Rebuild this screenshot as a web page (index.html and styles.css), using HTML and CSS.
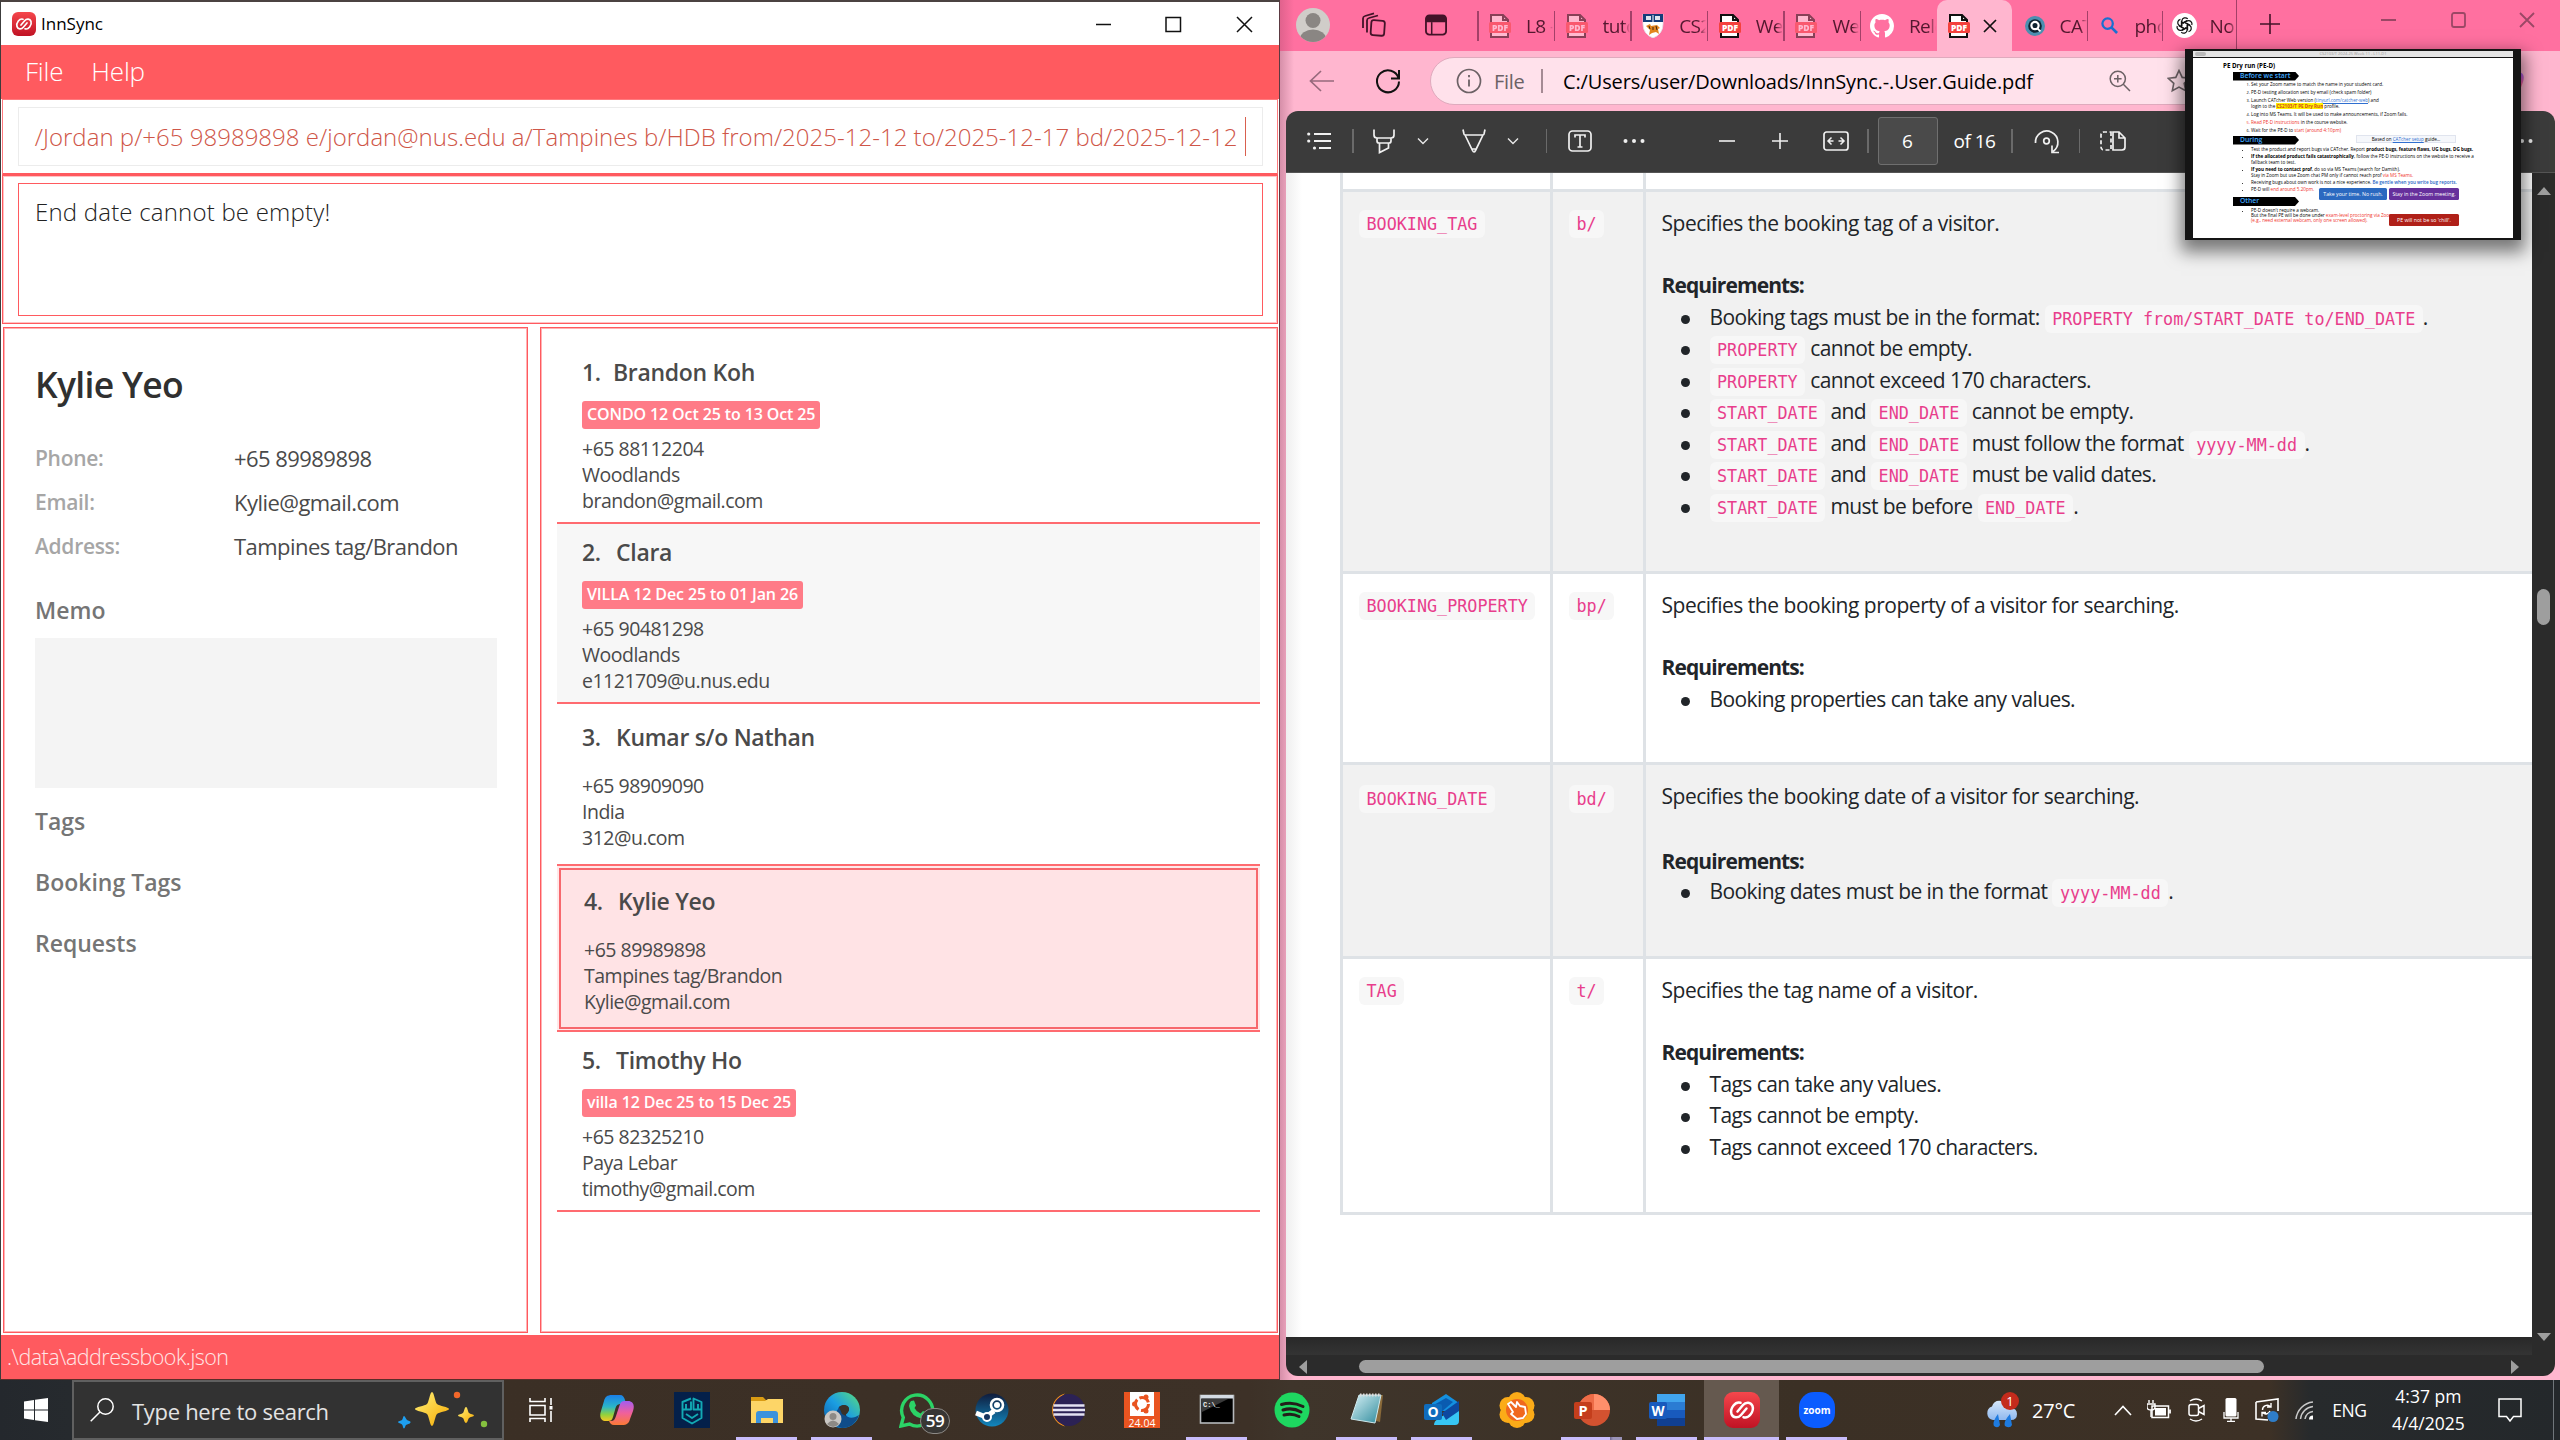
FILE: index.html
```html
<!DOCTYPE html>
<html lang="en">
<head>
<meta charset="utf-8">
<title>Desktop</title>
<link rel="stylesheet" href="styles.css">
</head>
<body>
<svg class="defs" width="0" height="0" aria-hidden="true">
  <defs>
    <linearGradient id="gRed" x1="0" y1="0" x2="0" y2="1"><stop offset="0" stop-color="#f5474c"/><stop offset="1" stop-color="#c01224"/></linearGradient>
    <linearGradient id="gCopA" x1="0" y1="0" x2="0" y2="1"><stop offset="0" stop-color="#1a7fe8"/><stop offset=".45" stop-color="#2bb5c9"/><stop offset=".75" stop-color="#8fd13f"/><stop offset="1" stop-color="#f5c722"/></linearGradient>
    <linearGradient id="gCopB" x1="0" y1="0" x2="0" y2="1"><stop offset="0" stop-color="#a45cf0"/><stop offset=".5" stop-color="#f0609c"/><stop offset="1" stop-color="#fb7a35"/></linearGradient>
    <linearGradient id="gEdge" x1="0" y1="1" x2="1" y2="0"><stop offset="0" stop-color="#0c59a4"/><stop offset=".5" stop-color="#1b9de2"/><stop offset="1" stop-color="#5be07a"/></linearGradient>
    <linearGradient id="gStar" x1="0" y1="0" x2="1" y2="1"><stop offset="0" stop-color="#fff27a"/><stop offset="1" stop-color="#f5a800"/></linearGradient>
    <linearGradient id="gSteam" x1="0" y1="0" x2="0" y2="1"><stop offset="0" stop-color="#101c3c"/><stop offset="1" stop-color="#1287be"/></linearGradient>
    <linearGradient id="gNote" x1="0" y1="0" x2="1" y2="1"><stop offset="0" stop-color="#d8f1f6"/><stop offset="1" stop-color="#2e8b9c"/></linearGradient>
    <linearGradient id="gCloud" x1="0" y1="0" x2="0" y2="1"><stop offset="0" stop-color="#d6e8fb"/><stop offset="1" stop-color="#8fb8ee"/></linearGradient>
    <symbol id="pdf" viewBox="0 0 22 24"><path d="M2 9V1h12l5 5v3M2 18v5h17v-5" fill="#fff" stroke="#111" stroke-width="2"/><path d="M14 1v5h5" fill="none" stroke="#111" stroke-width="2"/><rect x="0" y="8" width="22" height="11" rx="1.500" fill="#f4413d"/><text x="11" y="16.600" text-anchor="middle" font-family="Open Sans" font-weight="800" font-size="8.500" fill="#fff">PDF</text></symbol>
    <symbol id="innsync" viewBox="0 0 36 36"><rect width="36" height="36" rx="9" fill="url(#gRed)"/><g fill="none" stroke="#fff" stroke-width="2.500" stroke-linecap="round"><path id="hook" d="M22.500 16.500L17 23C14 26.500 9 26 7.500 22C6.500 19 7.500 16 9.500 13.500C11.500 11 14 10 16.500 10.800"/><use href="#hook" transform="rotate(180 18 18)"/></g></symbol>
    <symbol id="copilot" viewBox="0 0 34 30"><path d="M12 0h8c3 0 4 2 5 5l1 4h-5c-4 0-5 2-6 6l-2 7c-1 3-2 4-5 4H6c-5 0-7-4-5-10l3-10C5 2 7 0 12 0z" fill="url(#gCopA)"/><path d="M22 30h-8c-3 0-4-2-5-4h2c3 0 4-2 5-5l3-9c1-3 2-6 5-6h4c5 0 7 4 5 10l-3 8c-1 4-3 6-8 6z" fill="url(#gCopB)"/></symbol>
    <symbol id="chev" viewBox="0 0 12 8"><path d="M1 1.500l5 5 5-5" fill="none" stroke="#e8e8e8" stroke-width="1.400"/></symbol>
  </defs>
</svg>

<div class="desktop">
  <div class="windows">

    <section class="app">
      <header class="app-title">
        <svg class="app-logo" viewBox="0 0 36 36"><use href="#innsync"/></svg>
        <span class="app-name">InnSync</span>
        <svg class="app-controls" viewBox="0 0 160 20"><path d="M1 10.500h15M71 3.500h14.500v14H71zM142 3l15 15M157 3l-15 15" fill="none" stroke="#111" stroke-width="1.500"/></svg>
      </header>
      <nav class="menu"><span class="m-file">File</span><span class="m-help">Help</span></nav>
      <div class="command-pane"><div class="command-box"><div class="command-clip"><span class="command-text">/Jordan p/+65 98989898 e/jordan@nus.edu a/Tampines b/HDB from/2025-12-12 to/2025-12-17 bd/2025-12-12</span></div><i class="caret"></i></div></div>
      <div class="result-pane"><div class="result-box"><span class="result-text">End date cannot be empty!</span></div></div>
      <div class="split">
        <aside class="detail">
          <h1>Kylie Yeo</h1>
          <dl>
            <dt>Phone:</dt><dd>+65 89989898</dd>
            <dt>Email:</dt><dd>Kylie@gmail.com</dd>
            <dt>Address:</dt><dd>Tampines tag/Brandon</dd>
          </dl>
          <h2>Memo</h2>
          <div class="memo"></div>
          <h2>Tags</h2>
          <h2>Booking Tags</h2>
          <h2>Requests</h2>
        </aside>
        <main class="list">
          <article class="cell">
            <h3><span class="num">1.</span>Brandon Koh</h3>
            <span class="badge">CONDO 12 Oct 25 to 13 Oct 25</span>
            <p>+65 88112204</p><p>Woodlands</p><p>brandon@gmail.com</p>
          </article>
          <article class="cell shaded">
            <h3><span class="num wide">2.</span>Clara</h3>
            <span class="badge">VILLA 12 Dec 25 to 01 Jan 26</span>
            <p>+65 90481298</p><p>Woodlands</p><p>e1121709@u.nus.edu</p>
          </article>
          <article class="cell plain">
            <h3><span class="num wide">3.</span>Kumar s/o Nathan</h3>
            <p>+65 98909090</p><p>India</p><p>312@u.com</p>
          </article>
          <article class="cell plain selected">
            <div class="sel-frame">
              <h3><span class="num wide">4.</span>Kylie Yeo</h3>
              <p>+65 89989898</p><p>Tampines tag/Brandon</p><p>Kylie@gmail.com</p>
            </div>
          </article>
          <article class="cell">
            <h3><span class="num wide">5.</span>Timothy Ho</h3>
            <span class="badge">villa 12 Dec 25 to 15 Dec 25</span>
            <p>+65 82325210</p><p>Paya Lebar</p><p>timothy@gmail.com</p>
          </article>
        </main>
      </div>
      <footer class="status">.\data\addressbook.json</footer>
    </section>

    <section class="browser">
      <div class="tabstrip">
        <svg class="avatar" viewBox="0 0 34 34"><circle cx="17" cy="17" r="17" fill="#d0cdc9"/><clipPath id="av"><circle cx="17" cy="17" r="17"/></clipPath><g clip-path="url(#av)" fill="#8a8683"><circle cx="17" cy="12.500" r="7.500"/><ellipse cx="17" cy="31" rx="13" ry="9.500"/></g></svg>
        <svg class="workspaces" viewBox="0 0 26 26" fill="none" stroke="#431328" stroke-width="1.800" stroke-linejoin="round"><rect x="11" y="8.500" width="13.500" height="15" rx="2.500" transform="rotate(4 18 16)"/><path d="M7 20.500V8.500q0-2 2-2.500l9-2.500M3 16V6.500q0-2 2-2.500l9-2.700"/></svg>
        <svg class="tabactions" viewBox="0 0 24 22"><rect x="1" y="1" width="21" height="20" rx="3.500" fill="none" stroke="#431328" stroke-width="1.900"/><path d="M1 8V4q0-3 3-3h15q3 0 3 3v4z" fill="#431328"/><path d="M7 8v13" stroke="#431328" stroke-width="1.600"/></svg>
        <div class="tabs">
          <div class="tab dim"><svg viewBox="0 0 22 24"><use href="#pdf"/></svg><span>L8 -</span></div>
          <div class="tab dim"><svg viewBox="0 0 22 24"><use href="#pdf"/></svg><span>tuto</span></div>
          <div class="tab"><svg viewBox="0 0 22 24"><path d="M1 0h20v10q0 10-10 14Q1 20 1 10z" fill="#fff" stroke="#e3e3ea" stroke-width=".8"/><path d="M1 0h20v8H1z" fill="#153d7a"/><path d="M4 2h5v4H4zM13 2h5v4h-5z" fill="#dfe5ee"/><path d="M11 1v7" stroke="#fff"/><path d="M4 12l4-2 1 2 6-1 3 3-2 1 1 5-3-2-4 1-3 2 1-5z" fill="#e2851e"/><path d="M7 12l1 3M11 13v3M14 12l1 4" stroke="#3a2410"/></svg><span>CS2</span></div>
          <div class="tab"><svg viewBox="0 0 22 24"><use href="#pdf"/></svg><span>We</span></div>
          <div class="tab dim"><svg viewBox="0 0 22 24"><use href="#pdf"/></svg><span>We</span></div>
          <div class="tab github"><svg viewBox="0 0 16 16"><path fill="#fff" d="M8 0C3.580 0 0 3.580 0 8c0 3.540 2.290 6.530 5.470 7.590.4.070.55-.17.55-.38 0-.19-.01-.82-.01-1.490-2.010.37-2.530-.49-2.690-.94-.09-.23-.48-.94-.82-1.130-.28-.15-.68-.52-.01-.53.63-.01 1.080.58 1.230.82.72 1.210 1.870.87 2.330.66.070-.52.28-.87.51-1.070-1.780-.2-3.640-.89-3.640-3.950 0-.87.31-1.590.82-2.150-.08-.2-.36-1.020.08-2.120 0 0 .67-.21 2.200.82.64-.18 1.320-.27 2-.27s1.360.09 2 .27c1.530-1.040 2.200-.82 2.200-.82.44 1.100.16 1.920.08 2.120.51.56.82 1.270.82 2.150 0 3.070-1.870 3.750-3.650 3.950.29.25.54.73.54 1.480 0 1.070-.01 1.930-.01 2.200 0 .21.15.46.55.38A8.010 8.010 0 0 0 16 8c0-4.420-3.580-8-8-8z"/></svg><span>Rele</span></div>
          <div class="tab active"><svg viewBox="0 0 22 24"><use href="#pdf"/></svg><svg class="x" viewBox="0 0 14 14"><path d="M1 1l12 12M13 1L1 13" stroke="#111" stroke-width="1.700"/></svg></div>
          <div class="tab narrow"><svg viewBox="0 0 22 22"><circle cx="11" cy="11" r="11" fill="#4c8fb0"/><circle cx="11" cy="11" r="7.500" fill="#0e2230"/><circle cx="11" cy="10.500" r="4" fill="none" stroke="#fff" stroke-width="2.400"/><path d="M13 13l4 4" stroke="#fff" stroke-width="2"/></svg><span>CAT</span></div>
          <div class="tab narrow photo"><svg viewBox="0 0 18 18"><circle cx="7" cy="7" r="5.500" fill="none" stroke="#1b6fd0" stroke-width="2.400"/><path d="M11 11l6 6" stroke="#1b6fd0" stroke-width="2.800"/></svg><span>pho</span></div>
          <div class="tab narrow gpt"><svg viewBox="0 0 24 24"><circle cx="12" cy="12" r="12" fill="#fff"/><g fill="none" stroke="#111" stroke-width="1.200"><path id="petal" d="M9.500 12.500V7.500a3.200 3.200 0 0 1 5.600-1.800M9.500 10l5-2.800"/><use href="#petal" transform="rotate(60 12 12)"/><use href="#petal" transform="rotate(120 12 12)"/><use href="#petal" transform="rotate(180 12 12)"/><use href="#petal" transform="rotate(240 12 12)"/><use href="#petal" transform="rotate(300 12 12)"/></g></svg><span>No</span></div>
        </div>
        <svg class="newtab" viewBox="0 0 22 22"><path d="M11 1v20M1 11h20" stroke="#431328" stroke-width="1.600"/></svg>
        <svg class="win-controls" viewBox="0 0 154 16"><path d="M0 8h15M139 1l14 14M153 1l-14 14" stroke="#9b4765" stroke-width="1.800"/><rect x="71" y="1" width="13" height="14" rx="2" fill="none" stroke="#9b4765" stroke-width="1.800"/></svg>
      </div>

      <div class="navbar">
        <svg class="back" viewBox="0 0 26 22"><path d="M12 1L1.500 11 12 21M1.500 11H25" fill="none" stroke="#97697c" stroke-width="1.700"/></svg>
        <svg class="reload" viewBox="0 0 26 26"><path d="M23.500 10A11 11 0 1 0 24 13.500M24 2v8.500h-8" fill="none" stroke="#111" stroke-width="2"/></svg>
        <div class="address">
          <svg class="info" viewBox="0 0 26 26"><circle cx="13" cy="13" r="11.500" fill="none" stroke="#6c6165" stroke-width="1.700"/><path d="M13 11.500v7M13 7v2.200" stroke="#6c6165" stroke-width="1.800"/></svg>
          <span class="scheme">File</span><i class="bar"></i>
          <span class="url">C:/Users/user/Downloads/InnSync.-.User.Guide.pdf</span>
          <svg class="zoomi" viewBox="0 0 22 22"><circle cx="8.800" cy="8.800" r="7.600" fill="none" stroke="#6c6165" stroke-width="1.500"/><path d="M14.300 14.300l6.700 6.700M5 8.800h7.600M8.800 5v7.600" stroke="#6c6165" stroke-width="1.500"/></svg>
          <svg class="star" viewBox="0 0 24 24"><path d="M12 1.500l3.200 6.900 7.500.9-5.500 5.100 1.500 7.400-6.700-3.700-6.700 3.700 1.500-7.400L1.300 9.300l7.500-.9z" fill="none" stroke="#6c6165" stroke-width="1.600"/></svg>
        </div>
        <svg class="nav-copilot" viewBox="0 0 34 30"><use href="#copilot"/></svg>
      </div>

      <div class="pdfbar">
        <svg class="t-list" viewBox="0 0 24 18"><path d="M7 2h17M7 9h17M12 16h12" stroke="#f0f0f0" stroke-width="1.800"/><g fill="#f0f0f0"><circle cx="1.700" cy="2" r="1.600"/><circle cx="1.700" cy="9" r="1.600"/><circle cx="7.500" cy="16" r="1.600"/></g></svg>
        <i class="sep s1"></i>
        <svg class="t-high" viewBox="0 0 24 25"><path d="M2 .5V6q0 3 3 3h14q3 0 3-3V.5M5 9v3q0 2 2 2h10q2 0 2-2V9M7.500 14v9.500l9-4.500v-5" fill="none" stroke="#f0f0f0" stroke-width="1.700"/></svg>
        <svg class="chev c1" viewBox="0 0 12 8"><use href="#chev"/></svg>
        <svg class="t-pen" viewBox="0 0 24 25"><path d="M1 .5L2 5q.3 1 1.500 1h17q1.200 0 1.500-1L23 .5M3 6l7.500 15.500q1.500 3 3 0L21 6M9.800 20h4.400" fill="none" stroke="#f0f0f0" stroke-width="1.700"/></svg>
        <svg class="chev c2" viewBox="0 0 12 8"><use href="#chev"/></svg>
        <i class="sep s2"></i>
        <svg class="t-text" viewBox="0 0 24 22"><rect x="1" y="1" width="22" height="20" rx="3.500" fill="none" stroke="#f0f0f0" stroke-width="1.700"/><path d="M7 7.500V5h10v2.500M12 5v12M9.500 17h5" fill="none" stroke="#f0f0f0" stroke-width="1.700"/></svg>
        <svg class="t-dots" viewBox="0 0 22 6" fill="#f0f0f0"><circle cx="2.500" cy="3" r="2"/><circle cx="11" cy="3" r="2"/><circle cx="19.500" cy="3" r="2"/></svg>
        <svg class="t-minus" viewBox="0 0 16 16"><path d="M0 8h16" stroke="#f0f0f0" stroke-width="1.600"/></svg>
        <svg class="t-plus" viewBox="0 0 16 16"><path d="M0 8h16M8 0v16" stroke="#f0f0f0" stroke-width="1.600"/></svg>
        <svg class="t-fit" viewBox="0 0 26 20"><rect x="1" y="1" width="24" height="18" rx="2.500" fill="none" stroke="#f0f0f0" stroke-width="1.700"/><path d="M8.500 6.500L5 10l3.500 3.500M17.500 6.500L21 10l-3.500 3.500M5 10h5.500M15.500 10H21" fill="none" stroke="#f0f0f0" stroke-width="1.500"/></svg>
        <i class="sep s3"></i>
        <span class="page-input">6</span><span class="page-of">of 16</span>
        <i class="sep s4"></i>
        <svg class="t-rot" viewBox="0 0 26 26"><path d="M1.500 15A11.200 11.200 0 1 1 19 23.500M25 24.500h-7v-7" fill="none" stroke="#f0f0f0" stroke-width="1.700"/><circle cx="12.500" cy="13" r="2.800" fill="none" stroke="#f0f0f0" stroke-width="1.700"/></svg>
        <i class="sep s5"></i>
        <svg class="t-view" viewBox="0 0 26 20"><path d="M11 1v18H4q-3 0-3-3V4q0-3 3-3z" fill="none" stroke="#f0f0f0" stroke-width="1.700" stroke-dasharray="4 2.500"/><path d="M13 1h6l6 6v9q0 3-3 3h-9zM19 1v6h6" fill="none" stroke="#f0f0f0" stroke-width="1.700"/></svg>
        <svg class="t-more" viewBox="0 0 22 6" fill="#f0f0f0"><circle cx="2.500" cy="3" r="2"/><circle cx="11" cy="3" r="2"/><circle cx="19.500" cy="3" r="2"/></svg>
      </div>

      <div class="viewer">
        <div class="page">
          <div class="params">
            <div class="row stub"><div></div><div></div><div></div></div>
            <div class="row r1">
              <div><code>BOOKING_TAG</code></div><div><code>b/</code></div>
              <div><p>Specifies the booking tag of a visitor.</p><p class="req"><b>Requirements:</b></p>
                <ul>
                  <li>Booking tags must be in the format: <code>PROPERTY from/START_DATE to/END_DATE</code>.</li>
                  <li><code>PROPERTY</code> cannot be empty.</li>
                  <li><code>PROPERTY</code> cannot exceed 170 characters.</li>
                  <li><code>START_DATE</code> and <code>END_DATE</code> cannot be empty.</li>
                  <li><code>START_DATE</code> and <code>END_DATE</code> must follow the format <code>yyyy-MM-dd</code>.</li>
                  <li><code>START_DATE</code> and <code>END_DATE</code> must be valid dates.</li>
                  <li><code>START_DATE</code> must be before <code>END_DATE</code>.</li>
                </ul></div>
            </div>
            <div class="row r2">
              <div><code>BOOKING_PROPERTY</code></div><div><code>bp/</code></div>
              <div><p>Specifies the booking property of a visitor for searching.</p><p class="req"><b>Requirements:</b></p><ul><li>Booking properties can take any values.</li></ul></div>
            </div>
            <div class="row r3">
              <div><code>BOOKING_DATE</code></div><div><code>bd/</code></div>
              <div><p>Specifies the booking date of a visitor for searching.</p><p class="req"><b>Requirements:</b></p><ul><li>Booking dates must be in the format <code>yyyy-MM-dd</code>.</li></ul></div>
            </div>
            <div class="row r4">
              <div><code>TAG</code></div><div><code>t/</code></div>
              <div><p>Specifies the tag name of a visitor.</p><p class="req"><b>Requirements:</b></p><ul><li>Tags can take any values.</li><li>Tags cannot be empty.</li><li>Tags cannot exceed 170 characters.</li></ul></div>
            </div>
          </div>
        </div>
        <div class="vscroll"><i class="up"></i><i class="vthumb"></i><i class="down"></i></div>
        <div class="gutter"></div>
        <div class="hscroll"><i class="left"></i><i class="hthumb"></i><i class="right"></i></div>
      </div>
    </section>
  </div>

  <footer class="taskbar">
    <svg class="start" viewBox="0 0 24 24" fill="#fff"><path d="M0 3.500L10 2v9.500H0zM11 1.800L24 0v11.500H11zM0 12.500h10V22L0 20.500zM11 12.500h13V24l-13-1.800z"/></svg>
    <div class="search">
      <svg class="glass" viewBox="0 0 24 24"><circle cx="15.500" cy="8.500" r="7.700" fill="none" stroke="#fff" stroke-width="1.500"/><path d="M10 14L.7 23.300" stroke="#fff" stroke-width="1.500"/></svg>
      <span class="search-text">Type here to search</span>
      <svg class="sparkles" viewBox="0 0 92 38"><path d="M34 1c2 0 3 10 5 12s12 3 12 5-10 3-12 5-3 12-5 12-3-10-5-12-12-3-12-5 10-3 12-5 3-12 5-12z" fill="url(#gStar)"/><path d="M68 16c1.500 0 2 5 3 6s5 1.500 5 2.500-4 1.500-5 2.500-1.500 5-3 5-2-4-3-5-5-1.500-5-2.500 4-1.500 5-2.500 1.500-6 3-6z" fill="url(#gStar)"/><path d="M6 25c1 0 2 3 3 4s4 1 3.500 2.500S9 33 8 34s-1 3.500-2 3.500-1-3-2-4-4-1.500-4-2.500 3-1 4-2 1-4 2-4z" fill="#1e9ff0"/><circle cx="59" cy="4" r="3.200" fill="#f2672a"/><circle cx="86" cy="33" r="3.200" fill="#85c13f"/></svg>
    </div>
    <div class="icons">
      <div class="slot"><svg class="small" viewBox="0 0 24 24"><path d="M1 0v3.500h15V0M1 24v-3.500h15V24M1 7.500h15v9.500H1zM22 0v7M22 13v11" fill="none" stroke="#fff" stroke-width="1.600"/><rect x="20.500" y="8" width="3" height="3.500" fill="#fff"/></svg></div>
      <div class="slot"><svg viewBox="0 0 36 36"><use href="#copilot" x="1" y="3" width="34" height="30"/></svg></div>
      <div class="slot"><svg viewBox="0 0 36 36"><rect width="36" height="36" fill="#04204a"/><path d="M17 6.500L8.500 10v16l9.500 5.500L27.500 26V10L19.500 6.500v11l8 0M8.500 17.500H17v-8M12 12v5M24 12v5M12 22l6 4 6-4" fill="none" stroke="#12a9b4" stroke-width="1.900" stroke-linejoin="round"/></svg></div>
      <div class="slot run"><svg viewBox="0 0 36 36"><path d="M2 5h12l3 3h15v5H2z" fill="#d99b13"/><path d="M2 9h14l3-2h15v24H2z" fill="#fdd567"/><path d="M7 31V22q0-3 3-3h16q3 0 3 3v9h-5v-5H12v5z" fill="#3b92dd"/></svg></div>
      <div class="slot run"><svg viewBox="0 0 36 36"><circle cx="18" cy="18" r="18" fill="url(#gEdge)"/><path d="M14 17c1-5 12-5 11 1-1 3-4 3-3 5 2 4 9 3 13 0-3 9-10 13-17 13-8-2-10-11-4-19z" fill="#0f4c8a"/><path d="M15 15c5-4 11-1 10 3s-4 4-3 6l-4-2z" fill="#3a3128"/><circle cx="9" cy="27" r="8.500" fill="#c9c6c3"/><circle cx="9" cy="24.500" r="3.500" fill="#8d8985"/><path d="M3 32q6-7 12 0-6 6-12 0z" fill="#8d8985"/></svg></div>
      <div class="slot"><svg viewBox="0 0 36 36"><path d="M2 34l2.300-8.500A15.500 15.500 0 1 1 10.500 32z" fill="#3d3126" stroke="#2bd366" stroke-width="3.400"/><path d="M12 9l3-.5 2 5-1.500 2.500q2 4 6 5.500l2.500-2.500 5 2.500q0 5-5 5.500Q12 25 10 14q0-3 2-5z" fill="#2bd366"/></svg><span class="count">59</span></div>
      <div class="slot"><svg viewBox="0 0 36 36"><circle cx="18" cy="18" r="16.500" fill="url(#gSteam)"/><path d="M2 21l10 4 8-6" stroke="#fff" stroke-width="5" fill="none"/><circle cx="23" cy="13" r="6" fill="none" stroke="#fff" stroke-width="2.600"/><circle cx="23" cy="13" r="3" fill="#fff"/><circle cx="13" cy="25" r="4" fill="#16345e" stroke="#fff" stroke-width="2"/></svg></div>
      <div class="slot"><svg viewBox="0 0 36 36"><path d="M16 1.500A17 17 0 0 0 16 34.500A20 20 0 0 1 16 1.500z" fill="#f7941e"/><circle cx="20" cy="18" r="16" fill="#2c2255"/><path d="M4.500 13.500h31M4 18h32M4.500 22.500h31" stroke="#e4e2f2" stroke-width="2.600"/></svg></div>
      <div class="slot"><svg viewBox="0 0 36 36"><rect width="36" height="36" fill="#e95420"/><rect x="6" width="24" height="24" fill="#fff"/><circle cx="18" cy="12" r="6.500" fill="none" stroke="#e95420" stroke-width="3" stroke-dasharray="11 2.600"/><g fill="#e95420"><circle cx="10.500" cy="12" r="2.500"/><circle cx="22" cy="5" r="2.500"/><circle cx="22" cy="19" r="2.500"/></g><text x="18" y="34.500" text-anchor="middle" font-family="Open Sans" font-size="10.500" fill="#fff">24.04</text></svg></div>
      <div class="slot run"><svg viewBox="0 0 36 36"><rect x="1.500" y="3.500" width="33" height="27.500" fill="#000" stroke="#b5b8bb" stroke-width="1.600"/><path d="M2 3h32v3.500H2z" fill="#d4dbe3"/><path d="M3 7h26L3 20z" fill="#3a3a3a"/><text x="4" y="14.500" font-family="Liberation Mono" font-weight="700" font-size="7" fill="#eee">C:\_</text></svg></div>
      <div class="slot"><svg viewBox="0 0 36 36"><circle cx="18" cy="18" r="17.500" fill="#1ed760"/><path d="M7.500 12.500q11-3.500 21.500 2M9 18q9.500-3 18 2M10 23q8-2.300 15 1.500" fill="none" stroke="#231f1a" stroke-width="3" stroke-linecap="round"/></svg></div>
      <div class="slot run"><svg viewBox="0 0 36 36"><path d="M12 3h22l-3 27-4-1z" fill="#8a6a3a"/><path d="M10 3h22l-6 28-24-4z" fill="url(#gNote)" stroke="#cfe8ec"/><path d="M11 3h21" stroke="#dedede" stroke-width="3" stroke-dasharray="1.500 1.500"/></svg></div>
      <div class="slot run"><svg viewBox="0 0 36 36"><path d="M8 11L22 2l13 9v8H8z" fill="#1490df"/><path d="M8 14l14-8 7 4-14 12z" fill="#0a5bb0"/><path d="M10 33q0-4 4-6l21-14v16q0 4-4 4z" fill="#37c6f4"/><path d="M18 21l17-12v10L22 28z" fill="#0d48a0"/><rect y="12" width="18" height="16" rx="2" fill="#0f6cbd"/><text x="9" y="25" text-anchor="middle" font-family="Open Sans" font-weight="700" font-size="14" fill="#fff">O</text></svg></div>
      <div class="slot"><svg viewBox="0 0 36 36"><g fill="#fbab18"><circle cx="18" cy="9" r="9"/><circle cx="18" cy="27" r="9"/><circle cx="9" cy="13.500" r="8.500"/><circle cx="27" cy="13.500" r="8.500"/><circle cx="9" cy="22.500" r="8.500"/><circle cx="27" cy="22.500" r="8.500"/></g><circle cx="18" cy="18" r="11" fill="#f0681e"/><path d="M9 12l3-2 5 5 1-5 3 4 5 1 1 7-3 4-6 1-6-5 2-2z" fill="#f0681e" stroke="#fff" stroke-width="1.800" stroke-linejoin="round"/></svg></div>
      <div class="slot run stacked"><svg viewBox="0 0 36 36"><path d="M20 2a16 16 0 0 1 0 32A16 16 0 0 1 20 2z" fill="#d35230"/><path d="M20 2a16 16 0 0 1 16 16H20z" fill="#ff8f6b"/><path d="M20 2v16H4A16 16 0 0 1 20 2z" fill="#ed6c47"/><rect y="10" width="18" height="17" rx="2" fill="#c43e1c"/><text x="9" y="24" text-anchor="middle" font-family="Open Sans" font-weight="700" font-size="14.500" fill="#fff">P</text></svg></div>
      <div class="slot run"><svg viewBox="0 0 36 36"><rect x="8" y="2" width="28" height="32" rx="2" fill="#2b7cd3"/><path d="M8 2h28v8H8z" fill="#41a5ee"/><path d="M8 18h28v8H8z" fill="#185abd"/><path d="M8 26h28v8H8z" fill="#103f91"/><rect y="10" width="18" height="17" rx="2" fill="#185abd"/><text x="9" y="23.500" text-anchor="middle" font-family="Open Sans" font-weight="700" font-size="13.500" fill="#fff">W</text></svg></div>
      <div class="slot run current"><svg viewBox="0 0 36 36"><use href="#innsync"/></svg></div>
      <div class="slot run"><svg viewBox="0 0 36 36"><rect width="36" height="36" rx="15" fill="#0b5cff"/><text x="18" y="21.500" text-anchor="middle" font-family="Open Sans" font-weight="700" font-size="10" fill="#fff">zoom</text></svg></div>
    </div>
    <div class="tray">
      <svg class="weather" viewBox="0 0 36 36"><path d="M9 28a7 7 0 0 1-1-13.500Q10 8 17 9t9 7q7 0 7 6t-6 6z" fill="url(#gCloud)"/><path d="M14 22q-6 8-4 12 4 3 6-1zM26 22q-7 8-5 12 5 3 7-1z" fill="#1e7be0"/><circle cx="26" cy="9" r="9" fill="#c42b1c"/><text x="26" y="13.500" text-anchor="middle" font-family="Open Sans" font-size="13" fill="#fff">1</text></svg>
      <span class="temp">27°C</span>
      <svg class="up-chev" viewBox="0 0 18 11"><path d="M1 10l8-8.500L17 10" fill="none" stroke="#fff" stroke-width="1.600"/></svg>
      <svg class="battery" viewBox="0 0 24 20"><rect x="5" y="6" width="16.500" height="11.500" fill="none" stroke="#fff" stroke-width="1.500"/><rect x="8" y="8" width="11" height="7.500" fill="#fff"/><path d="M23 9.500v4" stroke="#fff" stroke-width="1.800"/><path d="M2 0v3M6 0v3M0 4h8v3q0 3-4 3t-4-3zM4 10v7" fill="none" stroke="#fff" stroke-width="1.400"/></svg>
      <svg class="cam" viewBox="0 0 17 24"><rect x="1" y="6.500" width="9.500" height="11" rx="2" fill="none" stroke="#fff" stroke-width="1.500"/><path d="M10.500 10.500l5.500-3v9l-5.500-3M2 3q6-4 12 0M2 21q6 4 12 0" fill="none" stroke="#fff" stroke-width="1.500"/></svg>
      <svg class="mic" viewBox="0 0 16 24"><rect x="2.500" y="0" width="11" height="18.500" rx="1.500" fill="#fff"/><path d="M1 14v6h14v-6M8 20v3M4 23.300h8" fill="none" stroke="#fff" stroke-width="1.300"/></svg>
      <svg class="sync" viewBox="0 0 24 24"><path d="M1 4L23 1v12M1 4v17l12 1" fill="none" stroke="#fff" stroke-width="1.600"/><path d="M7.500 12a4.500 4.500 0 0 1 8-3M16 5v4h-4M15 13a4.500 4.500 0 0 1-7 2M7 18.500v-4h4" fill="none" stroke="#fff" stroke-width="1.400"/><circle cx="18" cy="18.500" r="5.500" fill="#2f7dc8"/></svg>
      <svg class="wifi" viewBox="0 0 18 20"><path d="M1 19A19 19 0 0 1 18 2M5.500 19A14 14 0 0 1 18 6.500M10 19a9 9 0 0 1 8-7.500" fill="none" stroke="#c9c9c9" stroke-width="1.500"/><path d="M14 19.500a4 4 0 0 1 4-4v4z" fill="#fff"/></svg>
      <span class="lang">ENG</span>
      <div class="clock"><span>4:37 pm</span><span>4/4/2025</span></div>
      <svg class="notice" viewBox="0 0 24 24"><path d="M1 1h22v17.500H15.500L12 23l-3.500-4.500H1z" fill="none" stroke="#fff" stroke-width="1.500"/></svg>
      <i class="peek"></i>
    </div>
  </footer>

  <aside class="pip">
    <div class="pip-top"><i></i><span>CS2103/T 2024-25 Week 11 - L11-D1</span></div>
    <div class="slide">
      <h4>PE Dry run (PE-D)</h4>
      <h5>Before we start</h5>
      <ol>
        <li>Set your Zoom name to match the name in your student card.</li>
        <li>PE-D testing allocation sent by email (check spam folder)</li>
        <li class="two">Launch CATcher Web version (<u>tinyurl.com/catcher-web</u>) and<br>login to the <mark>CS2103/T PE Dry Run</mark> profile.</li>
        <li>Log into MS Teams. It will be used to make announcements, if Zoom fails.</li>
        <li class="red-num"><em>Read PE-D instructions</em> in the course website.</li>
        <li>Wait for the PE-D to <em>start (around 4:10pm)</em></li>
      </ol>
      <h5 class="during">During</h5>
      <ul class="mid">
        <li>Test the product and report bugs via CATcher. Report <b>product bugs, feature flaws, UG bugs, DG bugs.</b></li>
        <li class="two"><b>If the allocated product fails catastrophically</b>, follow the PE-D instructions on the website to receive a<br>fallback team to test.</li>
        <li class="two"><b>If you need to contact prof</b>, do so via MS Teams (search for Damith).<br>Stay in Zoom but use Zoom chat PM only if cannot reach prof <em>via MS Teams.</em></li>
        <li>Receiving bugs about own work is not a nice experience. <strong>Be gentle when you write bug reports.</strong></li>
        <li>PE-D will <em>end around 5.20pm.</em></li>
      </ul>
      <h5 class="other">Other</h5>
      <ul class="last">
        <li>PE-D doesn't require a webcam.<br>But the final PE will be done under <em>exam-level proctoring via Zoom</em><br><em>(e.g., need external webcam, only one screen allowed).</em></li>
      </ul>
      <span class="note-box">Based on <u>CATcher setup</u> guide…</span>
      <span class="tile blue">Take your time. No rush.</span>
      <span class="tile purple">Stay in the Zoom meeting.</span>
      <span class="tile red">PE will not be so 'chill'.</span>
    </div>
  </aside>
</div>
</body>
</html>
```
FILE: styles.css
```css
* { box-sizing: border-box; }
html, body { margin: 0; padding: 0; }
body { width: 2560px; height: 1440px; overflow: hidden; font-family: "Open Sans", "Noto Sans", sans-serif; background: #2d2926; }
h1, h2, h3, h4, h5, p, ul, ol, dl, dd { margin: 0; padding: 0; }
svg { display: block; flex: none; }
.defs { position: absolute; }
i { display: block; flex: none; }
.desktop { position: relative; width: 2560px; height: 1440px; display: flex; flex-direction: column; }
.windows { display: flex; height: 1380px; }

/* InnSync window */
.app { width: 1280px; height: 1380px; display: flex; flex-direction: column; background: #fff; border-top: 2px solid #4b4341; border-left: 1px solid #3c3c3c; border-right: 1px solid #5c3a42; border-bottom: 1px solid #5b2d29; }
.app-title { height: 43px; display: flex; align-items: center; padding-left: 11px; }
.app-logo { width: 24px; height: 24px; }
.app-name { margin-left: 5px; font-size: 17px; color: #000; white-space: nowrap; }
.app-controls { width: 160px; height: 20px; margin-left: auto; margin-right: 24px; }
.menu { height: 54px; background: #ff5a5f; display: flex; align-items: center; padding: 0 0 2px 24px; font-size: 26px; font-weight: 300; letter-spacing: -.2px; color: #fff; }
.m-help { margin-left: 28px; }
.command-pane { height: 76px; margin: 0 1px; padding: 7px 14px 7px 15px; border: 1px solid #ff7b7f; border-bottom: 2px solid #ff5a5f; }
.command-box { height: 59px; border: 1px solid #ececec; display: flex; align-items: center; padding: 0 16px 0 15px; }
.command-clip { flex: 1; height: 40px; display: flex; justify-content: flex-end; align-items: center; overflow: hidden; }
.command-text { flex: none; font-size: 24px; font-weight: 300; letter-spacing: .020px; color: #cf5648; white-space: nowrap; }
.caret { width: 1.500px; height: 39px; margin-left: 7px; background: #d9604f; }
.result-pane { height: 149px; margin: 0 1px; padding: 7px 14px 7px 15px; border: 1px solid #ff5a5f; box-shadow: inset 0 0 0 1px #ffc3c5; }
.result-box { height: 133px; border: 1.500px solid #ff5a5f; padding: 9px 16px; font-size: 24px; font-weight: 300; letter-spacing: .200px; line-height: 38px; color: #222; }
.split { flex: 1; display: flex; gap: 12px; padding: 3px 1px 2px 2px; }
.detail, .list { border: 1px solid #ff5a5f; box-shadow: inset 0 0 0 1px #ffb3b5; }
.detail { width: 525px; padding: 32px 31px 0 31px; }
.list { flex: 1; padding: 16px 17px 0 16px; }
h1 { font-size: 35.500px; font-weight: 600; letter-spacing: -.700px; line-height: 48px; color: #303030; }
dl { display: grid; grid-template-columns: 199px 1fr; margin-top: 28px; font-size: 22px; line-height: 44px; letter-spacing: -.550px; }
dt { font-size: 21px; font-weight: 600; letter-spacing: -.3px; color: #a6a6a6; }
dd { color: #4a4a4a; white-space: nowrap; }
h2 { font-size: 23px; font-weight: 600; line-height: 32px; color: #757575; margin-top: 29px; }
dl + h2 { margin-top: 26px; }
.memo { width: 462px; height: 150px; margin-top: 12px; background: #f4f4f4; }
.memo + h2 { margin-top: 17px; }

.cell { height: 180px; padding: 12px 25px 0; border-bottom: 2px solid #ff6b70; color: #4a4a4a; font-size: 19.500px; letter-spacing: -.500px; line-height: 26px; }
.cell h3 { display: flex; font-size: 23px; letter-spacing: -.300px; line-height: 32px; font-weight: 600; white-space: nowrap; }
.num { width: 31px; }
.num.wide { width: 34px; }
.badge { display: inline-block; vertical-align: top; height: 28px; margin: 13px 0 7px; padding: 0 5px; border-radius: 3px; background: #ff7b87; color: #fff; font-size: 16px; font-weight: 600; letter-spacing: -.120px; line-height: 27px; white-space: nowrap; }
.shaded { background: #f7f7f7; }
.plain { height: 162px; padding-top: 17px; }
.plain h3 { margin-bottom: 20px; }
.selected { height: 166px; padding: 2px 2px 0; background: #ffe9ea; }
.sel-frame { height: 161px; border: 2px solid #f7686d; background: #ffe3e5; padding: 15px 23px 0; }
.status { height: 44px; background: #ff5a5f; color: #ffe6e6; font-size: 21.500px; font-weight: 300; letter-spacing: -.520px; line-height: 44px; padding-left: 6px; }

/* Browser window */
.browser { width: 1280px; height: 1380px; display: flex; flex-direction: column; background: linear-gradient(90deg, #d68fa9, #ffb6cf 14px); overflow: hidden; }
.tabstrip { height: 51px; display: flex; background: linear-gradient(90deg, #e0628d, #ff70a0 14px); padding-left: 16px; }
.avatar { width: 34px; height: 34px; margin-top: 8px; }
.workspaces { width: 26px; height: 26px; margin: 12px 0 0 30px; }
.tabactions { width: 23px; height: 22px; margin: 14px 0 0 39px; }
.tabs { display: flex; margin-left: 29px; }
.tab { position: relative; width: 76.600px; height: 51px; display: flex; align-items: center; padding-left: 12px; overflow: hidden; font-size: 19px; color: #54182f; white-space: nowrap; }
.tab::before { content: ""; position: absolute; left: 0; top: 11px; width: 1.500px; height: 30px; background: #a34068; }
.tab svg { width: 22px; height: 24px; }
.tab span { margin-left: 15px; width: 27px; overflow: hidden; letter-spacing: -.600px; -webkit-mask-image: linear-gradient(90deg, #000 75%, transparent); mask-image: linear-gradient(90deg, #000 75%, transparent); }
.tab.dim svg { opacity: .5; }
.tab.github svg { width: 24px; margin-left: -2px; }
.tab.active { width: 75px; background: #ffb6cf; border-radius: 10px 10px 0 0; padding-left: 11px; }
.tab.active::before, .tab.active + .tab::before { display: none; }
.tab.active .x { width: 14px; height: 14px; margin-left: 13px; }
.tab.narrow { width: 75px; padding-left: 13px; }
.tab.narrow svg { width: 20px; height: 20px; }
.tab.narrow span { margin-left: 15px; }
.tab.photo svg { width: 17px; height: 17px; margin-left: 1px; }
.tab.photo span { margin-left: 17px; }
.tab.narrow.gpt { padding-left: 10px; border-right: 1.500px solid #a34068; }
.tab.gpt svg { width: 25px; height: 25px; }
.tab.narrow.gpt svg { width: 25px; height: 25px; }
.tab.gpt span { margin-left: 13px; }
.newtab { width: 22px; height: 22px; margin: 13px 0 0 22px; }
.win-controls { width: 154px; height: 16px; margin: 12px 0 0 100px; }

.navbar { height: 60px; display: flex; align-items: center; padding-left: 29px; }
.back { width: 26px; height: 22px; }
.reload { width: 26px; height: 26px; margin-left: 40px; }
.address { width: 1066px; height: 48px; margin-left: 29px; border: 1.500px solid #dfaabd; border-radius: 24px; background: #ffe1eb; display: flex; align-items: center; padding-left: 25px; }
.info { width: 26px; height: 26px; }
.scheme { margin-left: 12px; font-size: 20px; letter-spacing: -.3px; color: #6c6165; }
.bar { width: 1.500px; height: 24px; margin-left: 17px; background: #a58a94; }
.url { margin-left: 20px; font-size: 20px; letter-spacing: -.130px; color: #000; white-space: nowrap; }
.zoomi { width: 22px; height: 22px; margin-left: auto; }
.star { width: 24px; height: 24px; margin: 0 304px 0 36px; }
.nav-copilot { width: 34px; height: 32px; margin-left: -6px; }

.pdfbar { height: 62px; margin: 0 5px 0 6px; background: #3b3b3b; border-bottom: 1px solid #555; border-radius: 12px 12px 0 0; display: flex; align-items: center; padding: 0 0 1px 21px; color: #fff; font-size: 20px; }
.sep { width: 1.500px; height: 24px; background: #6a6a6a; }
.t-list { width: 24px; height: 18px; }
.s1 { margin-left: 21px; }
.t-high { width: 24px; height: 25px; margin-left: 18px; }
.chev { width: 12px; height: 8px; }
.c1 { margin-left: 21px; }
.t-pen { width: 24px; height: 25px; margin-left: 33px; }
.c2 { margin-left: 21px; }
.s2 { margin-left: 27px; }
.t-text { width: 24px; height: 22px; margin-left: 21px; }
.t-dots { width: 22px; height: 6px; margin-left: 31px; }
.t-minus { width: 16px; height: 16px; margin-left: 74px; }
.t-plus { width: 16px; height: 16px; margin-left: 37px; }
.t-fit { width: 26px; height: 20px; margin-left: 35px; }
.s3 { margin-left: 18px; }
.page-input { width: 60px; height: 48px; margin-left: 9px; border: 1px solid #6f6f6f; border-radius: 3px; background: #4a4a4a; text-align: center; line-height: 46px; font-size: 19px; }
.page-of { margin-left: 16px; font-size: 19px; letter-spacing: -.5px; white-space: nowrap; }
.s4 { margin-left: auto; }
.t-rot { width: 26px; height: 26px; margin-left: 21px; }
.s5 { margin-left: 19px; }
.t-view { width: 26px; height: 20px; margin-left: 20px; }
.t-more { width: 22px; height: 6px; margin: 0 22px 0 385px; }

.viewer { height: 1203px; margin: 0 5px 0 6px; display: grid; grid-template-columns: 1246px 23px; grid-template-rows: 1164px 18px 21px; background: #2b2b2b; border-radius: 0 0 12px 12px; overflow: hidden; }
.page { background: linear-gradient(90deg, #efefef, #fff 16px); overflow: hidden; padding-left: 54px; }
.params { font-size: 21px; letter-spacing: -.480px; line-height: 31.500px; color: #212529; border-left: 3px solid #dee2e6; width: 1192px; }
.row { display: grid; grid-template-columns: 210px 93px 1fr; border-bottom: 3px solid #dee2e6; }
.row > div { padding: 16px 15px 0 15.500px; white-space: nowrap; }
.row > div:nth-child(-n+2) { border-right: 3px solid #dee2e6; padding: 15px 0 0 16px; }
.row.r3 > div:nth-child(-n+2) { padding-top: 17px; }
.stub { height: 19px; background: #fff; }
.r1 { height: 382px; background: #f1f1f1; }
.r2 { height: 191px; background: #fff; }
.r3 { height: 194px; background: #f1f1f1; }
.r4 { height: 256px; background: #fff; }
.req { margin-top: 30.500px; }
.r3 .req { margin-top: 33px; }
.row b { font-weight: 700; letter-spacing: -.900px; }
.r3 ul { margin-top: -1px; }
.row ul { list-style: none; }
.row li { position: relative; padding-left: 48px; letter-spacing: -.600px; word-spacing: .2px; }
.row li::before { content: ""; position: absolute; left: 19px; top: 13px; width: 9px; height: 9px; border-radius: 50%; background: #212529; }
code { display: inline-block; vertical-align: 0; height: 28px; line-height: 28px; padding: 0 7.500px; border-radius: 6px; background: #f7f7f7; color: #e83e8c; font-family: "DejaVu Sans Mono", monospace; font-size: 16.750px; letter-spacing: 0; word-spacing: 0; }
.vscroll { display: flex; flex-direction: column; align-items: center; grid-row: 1 / 4; grid-column: 2; }
.up { width: 0; height: 0; margin-top: 14px; border: 7.500px solid transparent; border-top: 0; border-bottom: 8px solid #9e9e9e; }
.vthumb { width: 13px; height: 36px; margin-top: 394px; border-radius: 7px; background: #9e9e9e; }
.down { width: 0; height: 0; margin-top: 708px; border: 7.500px solid transparent; border-bottom: 0; border-top: 8px solid #9e9e9e; }
.gutter { background: linear-gradient(#282828, #343434); }
.hscroll { display: flex; align-items: center; padding: 2px 0 0 13px; }
.left { width: 0; height: 0; border: 7px solid transparent; border-left: 0; border-right: 8px solid #9e9e9e; }
.hthumb { width: 905px; height: 13px; margin-left: 52px; border-radius: 7px; background: #9e9e9e; }
.right { width: 0; height: 0; margin-left: 247px; border: 7px solid transparent; border-right: 0; border-left: 8px solid #9e9e9e; }

/* Taskbar */
.taskbar { height: 60px; display: flex; align-items: center; color: #fff; background: linear-gradient(90deg, #24282d 0, #262a2e 70px, #3b2f25 500px, #3d3127 1250px, #3f352b 1290px, #3b3025 1800px, #3d3126 2270px, #272a2c 2310px, #24282b 2560px); }
.start { width: 24px; height: 24px; margin: 0 24px; }
.search { width: 432px; height: 60px; border: 2px solid #606060; background: #323232; display: flex; align-items: center; padding-left: 16px; }
.taskbar .glass { width: 24px; height: 24px; }
.search-text { margin-left: 18px; padding-top: 2px; font-size: 22px; letter-spacing: -.3px; color: #e3e3e3; white-space: nowrap; }
.sparkles { width: 92px; height: 38px; margin-left: auto; margin-right: 12px; }
.icons { display: flex; }
.slot { position: relative; width: 75px; height: 60px; display: grid; place-items: center; }
.slot svg { width: 36px; height: 36px; }
.slot svg.small { width: 24px; height: 24px; margin-right: 2px; }
.slot.run::after { content: ""; position: absolute; left: 7px; bottom: 0; width: 61px; height: 3px; background: #c8bcfb; }
.slot.stacked::after { background: linear-gradient(90deg, #c8bcfb 49px, #6f6890 49px, #9a93b8 52px); }
.slot.current { background: #65594f; }
.slot.current::after { left: 0; width: 75px; }
.count { position: absolute; left: 41px; top: 28px; width: 30px; height: 26px; border-radius: 13px; border: 1.500px solid #8d8a86; background: #383634; font-size: 17px; font-weight: 600; line-height: 23px; text-align: center; letter-spacing: -.5px; }
.tray { display: flex; align-items: center; flex: 1; height: 60px; font-size: 20px; padding-left: 130px; }
.weather { width: 36px; height: 36px; }
.temp { margin-left: 12px; letter-spacing: -.2px; white-space: nowrap; }
.up-chev { width: 18px; height: 11px; margin-left: 39px; }
.battery { width: 24px; height: 20px; margin-left: 15px; }
.cam { width: 17px; height: 24px; margin-left: 17px; }
.mic { width: 16px; height: 24px; margin-left: 18px; }
.sync { width: 24px; height: 24px; margin-left: 16px; }
.wifi { width: 18px; height: 20px; margin-left: 16px; }
.lang { margin-left: 19px; font-size: 17.500px; letter-spacing: -.5px; }
.clock { width: 80px; margin-left: 22px; display: flex; flex-direction: column; align-items: center; font-size: 17.500px; line-height: 27px; white-space: nowrap; }
.notice { width: 24px; height: 24px; margin-left: 30px; }
.peek { width: 1.500px; height: 60px; margin-left: auto; margin-right: 6px; background: #70767a; }

/* Floating video thumbnail */
.pip { position: absolute; left: 2185px; top: 49px; width: 336px; height: 191px; background: #151515; padding: 2px 8px 2px; box-shadow: 0 8px 16px 4px rgba(0, 0, 0, .5); }
.pip-top { height: 6px; background: #e4e4e4; font-size: 4px; line-height: 6px; color: #999; text-align: center; position: relative; }
.pip-top i { position: absolute; left: 2px; top: 1px; width: 11px; height: 4px; border-radius: 2px; background: #b9b9b9; }
.slide { position: relative; height: 180px; background: #fff; padding: 3px 0 0 30px; margin-top: 1px; font-size: 4.600px; line-height: 6px; color: #000; white-space: nowrap; }
.slide h4 { font-size: 6.200px; line-height: 9px; font-weight: 700; color: #000; }
.slide h5 { width: 66px; height: 9px; margin: 1.500px 0 0 10px; padding-left: 7px; background: #000; color: #3fa9ff; font-size: 6.800px; line-height: 8.500px; font-weight: 600; clip-path: polygon(0 0, 62px 0, 66px 50%, 62px 100%, 0 100%); }
.slide h5.during { margin-top: 1px; }
.slide h5.other { margin-top: 4px; }
.slide ol, .slide ul { padding-left: 28px; }
.slide li { height: 8px; }
.slide li.two { height: 14px; }
.slide .mid { padding-top: 1.500px; }
.slide .mid li { height: 7px; }
.slide .mid li.two { height: 13px; }
.slide li::marker { font-size: 4px; }
.slide em { font-style: normal; color: #f0332c; }
.slide u { color: #2f6fd0; }
.slide mark { background: #fff200; color: #d34a18; font-weight: 700; }
.slide strong { color: #1c62c4; font-weight: 600; }
.slide .red-num::marker { color: #f0332c; }
.slide .last { padding-top: 2px; }
.slide .last li { line-height: 5px; }
.note-box { position: absolute; left: 163px; top: 77px; width: 100px; height: 8px; border: 1px solid #e0e4ee; background: rgba(238, 241, 248, .6); text-align: center; }
.tile { position: absolute; height: 12px; border-radius: 1.500px; color: #fff; font-size: 5.200px; line-height: 12px; text-align: center; }
.tile.blue { left: 126px; top: 130px; width: 68px; background: #2b69c0; }
.tile.purple { left: 196px; top: 130px; width: 70px; background: #66309c; }
.tile.red { left: 196px; top: 156px; width: 70px; background: #b02018; }
```
